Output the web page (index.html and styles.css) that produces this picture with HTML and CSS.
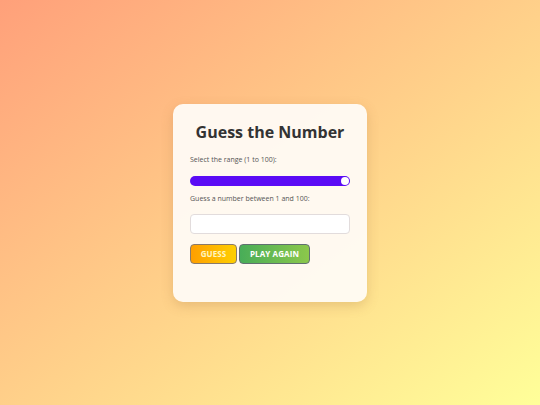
FILE: index.html
```html
<!DOCTYPE html>
<html>
<head>
<meta charset="utf-8">
<link rel="stylesheet" href="styles.css">
</head>
<body>
<main class="card">
  <h1 class="title">Guess the Number</h1>
  <label class="label">Select the range (1 to 100):</label>
  <input class="range" type="range" min="1" max="100" value="100">
  <label class="label">Guess a number between 1 and 100:</label>
  <input class="field" type="text">
  <div class="actions">
    <button class="btn btn-guess">Guess</button>
    <button class="btn btn-again">Play Again</button>
  </div>
  <p class="result"></p>
</main>
</body>
</html>
```
FILE: styles.css
```css
html, body { height: 100%; }
body {
  margin: 0;
  font-family: "Open Sans", sans-serif;
  background: linear-gradient(to bottom right, #ffa07a, #ffff99);
  display: flex;
  align-items: center;
  justify-content: center;
}
.card {
  height: 198px;
  box-sizing: border-box;
  width: 194px;
  padding: 17px 17px 0;
  background: rgba(255, 251, 246, 0.95);
  border-radius: 10px;
  box-shadow: 0 4px 12px rgba(160, 110, 60, 0.25);
  display: flex;
  flex-direction: column;
}
.title {
  margin: 0;
  font-size: 16px;
  font-weight: bold;
  color: #333;
  text-align: center;
  line-height: 22px;
  white-space: nowrap;
}
.label {
  font-size: 7px;
  color: #555;
  line-height: 10px;
}
.title + .label { margin-top: 12px; }
.range {
  -webkit-appearance: none;
  appearance: none;
  margin: 11px 0 0;
  padding: 0 1px;
  box-sizing: border-box;
  width: 160px;
  height: 10px;
  border-radius: 5px;
  background: #5a0bf5;
  outline: none;
}
.range::-webkit-slider-thumb {
  -webkit-appearance: none;
  width: 8px;
  height: 8px;
  border-radius: 50%;
  background: #fff;
  border: none;
}
.range + .label { margin-top: 8px; }
.field {
  margin: 10px 0 0;
  height: 20px;
  box-sizing: border-box;
  width: 160px;
  border: 1px solid #e2dcdc;
  border-radius: 4px;
  background: #fff;
}
.actions {
  margin-top: 10px;
  display: flex;
  gap: 2px;
}
.btn {
  height: 20px;
  box-sizing: border-box;
  border: 1px solid #8a7a6a;
  border-radius: 4px;
  color: #fff;
  font-family: "Open Sans", sans-serif;
  font-weight: bold;
  font-size: 8px;
  letter-spacing: 0.1px;
  text-transform: uppercase;
  padding: 0;
}
.btn-guess {
  width: 47px;
  background: linear-gradient(90deg, #ff9f00, #ffcf00);
  color: #fff6c0;
}
.btn-again {
  width: 71px;
  background: linear-gradient(90deg, #48ad58, #8cc84b);
  border-color: #607070;
}
.result { margin: 0; }
```
